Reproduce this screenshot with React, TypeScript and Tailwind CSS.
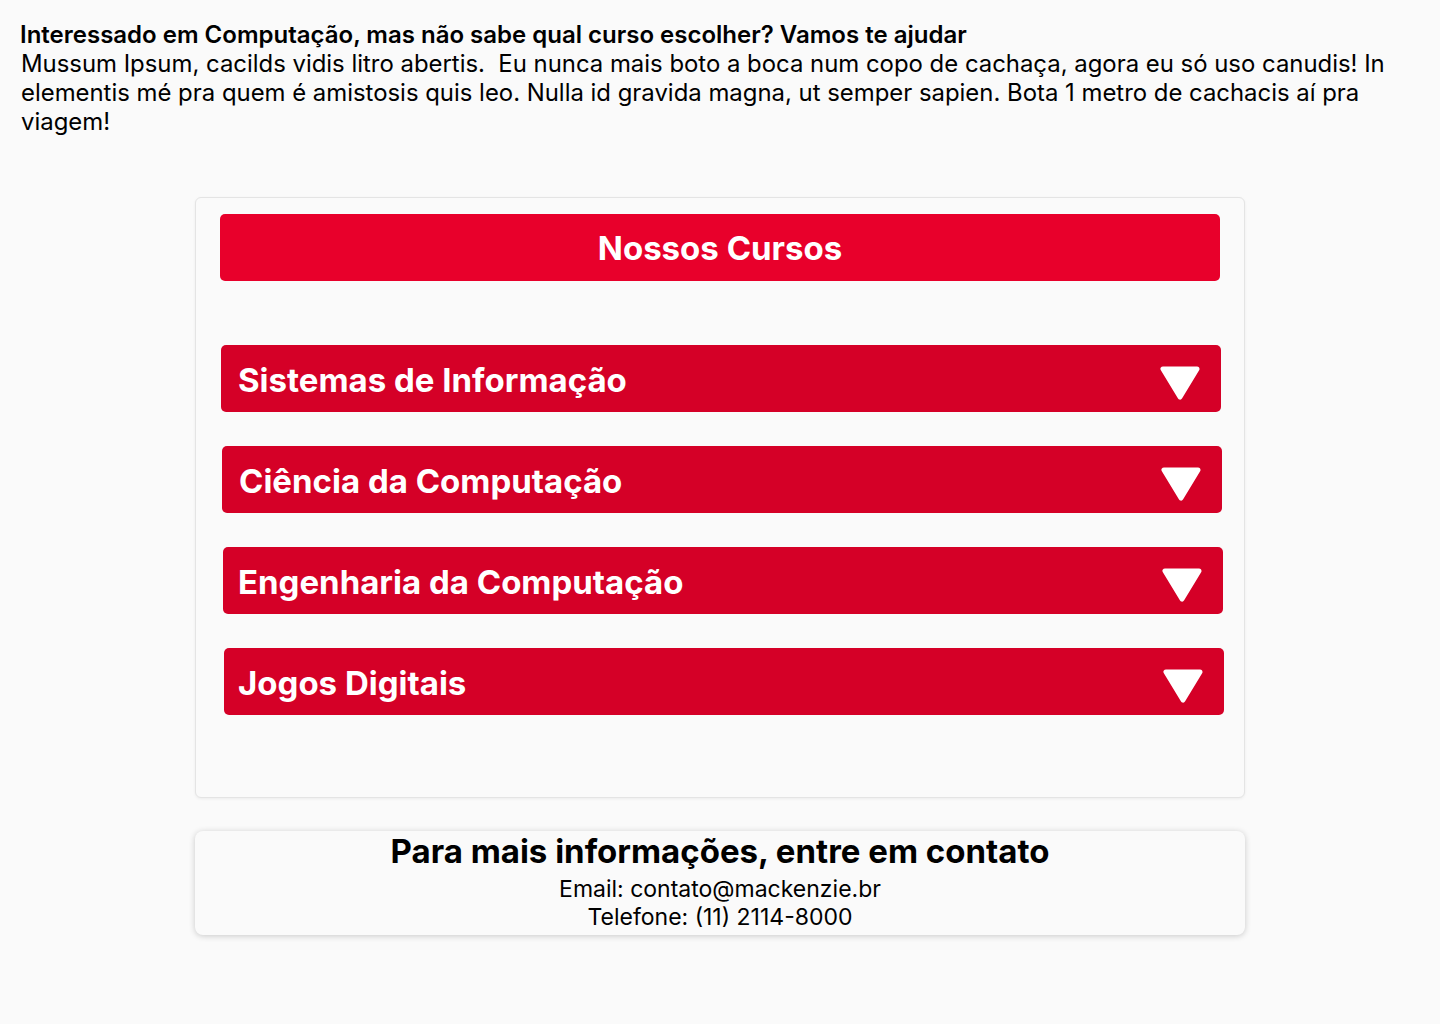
import { useState } from "react";

const cursos = [
  { nome: "Sistemas de Informação", shift: "ml-[1px] pl-[17px]" },
  { nome: "Ciência da Computação", shift: "ml-[2px] pl-[17px]" },
  { nome: "Engenharia da Computação", shift: "ml-[3px] pl-[15px]" },
  { nome: "Jogos Digitais", shift: "ml-[4px] pl-[14px]" },
];

const Seta = () => (
  <svg width="42" height="36" viewBox="0 0 42 36" className="mt-[8px] shrink-0">
    <path
      d="M4 4 L38 4 L21 32 Z"
      fill="white"
      stroke="white"
      strokeWidth="5"
      strokeLinejoin="round"
    />
  </svg>
);

const Curso = ({ nome, shift }: { nome: string; shift: string }) => {
  const [aberto, setAberto] = useState(false);
  return (
    <button
      onClick={() => setAberto((prev) => !prev)}
      className={`${shift} flex h-[67px] w-[1000px] items-center justify-between rounded-[5px] bg-[#d50027] pr-[20px] text-left`}
    >
      <span className="pt-[4px] text-[33px] font-bold leading-none text-white">{nome}</span>
      <Seta />
    </button>
  );
};

export default function App() {
  return (
    <div className="min-h-screen bg-[#fafafa] font-['Inter',sans-serif] text-black">
      <div className="px-5 pt-[21px]">
        <h1 className="text-[24px] font-semibold leading-[28px]">
          Interessado em Computação, mas não sabe qual curso escolher? Vamos te ajudar
        </h1>
        <p className="pl-px text-[23.9px] leading-[29px]">
          Mussum Ipsum, cacilds vidis litro abertis.&nbsp; Eu nunca mais boto a boca num copo de cachaça, agora eu só uso canudis! In elementis mé pra quem é amistosis quis leo. Nulla id gravida magna, ut semper sapien. Bota 1 metro de cachacis aí pra viagem!
        </p>
      </div>

      <div className="mx-auto mt-[61px] w-[1050px]">
        <section className="flex h-[601px] flex-col rounded-[6px] border border-[#e4e4e4] bg-[#fafafa] px-[24px] pt-[16px] shadow-[0_1px_3px_rgba(0,0,0,0.06)]">
          <div className="flex h-[67px] w-[1000px] items-center justify-center rounded-[5px] bg-[#e8002b]">
            <h2 className="pt-[2px] text-[33px] font-bold leading-none text-white">Nossos Cursos</h2>
          </div>
          <div className="mt-[64px] flex flex-col gap-[34px]">
            {cursos.map((c) => (
              <Curso key={c.nome} nome={c.nome} shift={c.shift} />
            ))}
          </div>
        </section>

        <footer className="mt-[33px] flex h-[104px] flex-col items-center rounded-[8px] bg-[#fafafa] shadow-[0_1px_6px_rgba(0,0,0,0.2)]">
          <h3 className="text-[33px] font-bold leading-[40px]">Para mais informações, entre em contato</h3>
          <p className="mt-[4px] text-[23px] leading-[28px]">Email: contato@mackenzie.br</p>
          <p className="text-[23px] leading-[28px]">Telefone: (11) 2114-8000</p>
        </footer>
      </div>
    </div>
  );
}
